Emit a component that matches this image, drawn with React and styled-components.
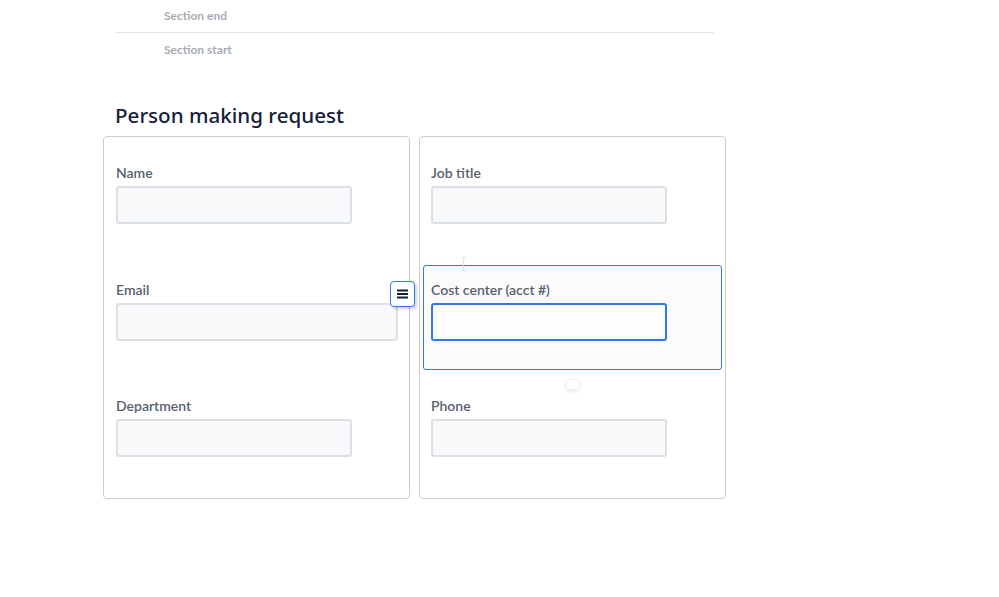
import React from "react";
import styled, { createGlobalStyle } from "styled-components";

const Global = createGlobalStyle`
  html, body { margin: 0; padding: 0; background: #fff; }
  body { font-family: "Lato", "Noto Sans", sans-serif; }
`;

const Page = styled.div`
  position: relative;
  width: 999px;
  height: 597px;
  padding-left: 103px;
  box-sizing: border-box;
`;

const SectionList = styled.div`
  width: 599px;
  margin-left: 12px;
`;

const SectionMarker = styled.div`
  height: ${(p) => (p.$divider ? 33 : 34)}px;
  box-sizing: border-box;
  padding-left: 49px;
  padding-bottom: 1px;
  display: flex;
  align-items: center;
  font-size: 12px;
  font-weight: 700;
  color: #a6acb3;
  border-bottom: ${(p) => (p.$divider ? "1px solid #e3e5e8" : "none")};
`;

const Heading = styled.h2`
  margin: 34px 0 0 12px;
  height: 35px;
  line-height: 28px;
  font-family: "Noto Sans", "Lato", sans-serif;
  font-size: 20.6px;
  font-weight: 500;
  color: #15203a;
`;

const Columns = styled.div`
  display: flex;
  gap: 9px;
`;

const Panel = styled.div`
  position: relative;
  width: 307px;
  height: 363px;
  box-sizing: border-box;
  border: 1px solid #c9cdd2;
  border-radius: 4px;
  padding: 11px 3px;
  display: flex;
  flex-direction: column;
  gap: 11.5px;
`;

const Cell = styled.div`
  position: relative;
  height: 105px;
  box-sizing: border-box;
  border: 1px solid ${(p) => (p.$selected ? "#2f78ec" : "transparent")};
  border-radius: 3px;
  background: ${(p) => (p.$selected ? "#fbfbfc" : "transparent")};
  padding: 14px 7px 0 ${(p) => p.$pl}px;
  display: flex;
  flex-direction: column;
`;

const Label = styled.label`
  font-size: 14px;
  line-height: 20px;
  font-weight: 600;
  color: #566170;
  margin-bottom: 3px;
`;

const Input = styled.div`
  width: ${(p) => p.$w}px;
  height: 38px;
  box-sizing: border-box;
  border: 2px solid ${(p) => (p.$focus ? "#2f78ec" : "#dcdfe3")};
  border-radius: 3px;
  background: ${(p) => (p.$focus ? "#fdfdfd" : "#f8f9fb")};
`;

const Handle = styled.button`
  position: absolute;
  left: -34px;
  top: 15px;
  width: 25px;
  height: 26px;
  box-sizing: border-box;
  padding: 0;
  border: 1.5px solid #2f78ec;
  border-radius: 4px;
  background: #fff;
  box-shadow: 2px 2px 3px rgba(0, 0, 0, 0.18);
  display: flex;
  align-items: center;
  justify-content: center;
`;

const DragDot = styled.div`
  position: absolute;
  left: 141px;
  bottom: -21px;
  width: 13px;
  height: 9px;
  border-radius: 5px;
  background: #fff;
  border: 1px solid #eceef0;
  box-shadow: 0 2px 4px rgba(0, 0, 0, 0.08);
`;

const Cursor = styled.div`
  position: absolute;
  left: 39px;
  top: -9px;
  width: 1px;
  height: 14px;
  background: #dfe1e4;
  &::before, &::after {
    content: "";
    position: absolute;
    left: -2px;
    width: 5px;
    height: 1px;
    background: #dfe1e4;
  }
  &::before { top: 0; }
  &::after { bottom: 0; }
`;

const MenuIcon = () => (
  <svg width="11" height="10" viewBox="0 0 11 10">
    <rect x="0" y="0.5" width="11" height="2" fill="#15203a" />
    <rect x="0" y="4" width="11" height="2" fill="#15203a" />
    <rect x="0" y="7.5" width="11" height="2" fill="#15203a" />
  </svg>
);

const Field = ({ label, w, selected, focus, pl = 8, children }) => (
  <Cell $selected={selected} $pl={pl}>
    <Label>{label}</Label>
    <Input $w={w} $focus={focus} />
    {children}
  </Cell>
);

export default function App() {
  return (
    <>
      <Global />
      <Page>
        <SectionList>
          <SectionMarker $divider>Section end</SectionMarker>
          <SectionMarker>Section start</SectionMarker>
        </SectionList>
        <Heading>Person making request</Heading>
        <Columns>
          <Panel>
            <Field label="Name" w={236} />
            <Field label="Email" w={282} />
            <Field label="Department" w={236} />
          </Panel>
          <Panel>
            <Field label="Job title" w={236} pl={7} />
            <Field label="Cost center (acct #)" w={236} pl={7} selected focus>
              <Handle aria-label="menu">
                <MenuIcon />
              </Handle>
              <Cursor />
              <DragDot />
            </Field>
            <Field label="Phone" w={236} pl={7} />
          </Panel>
        </Columns>
      </Page>
    </>
  );
}
